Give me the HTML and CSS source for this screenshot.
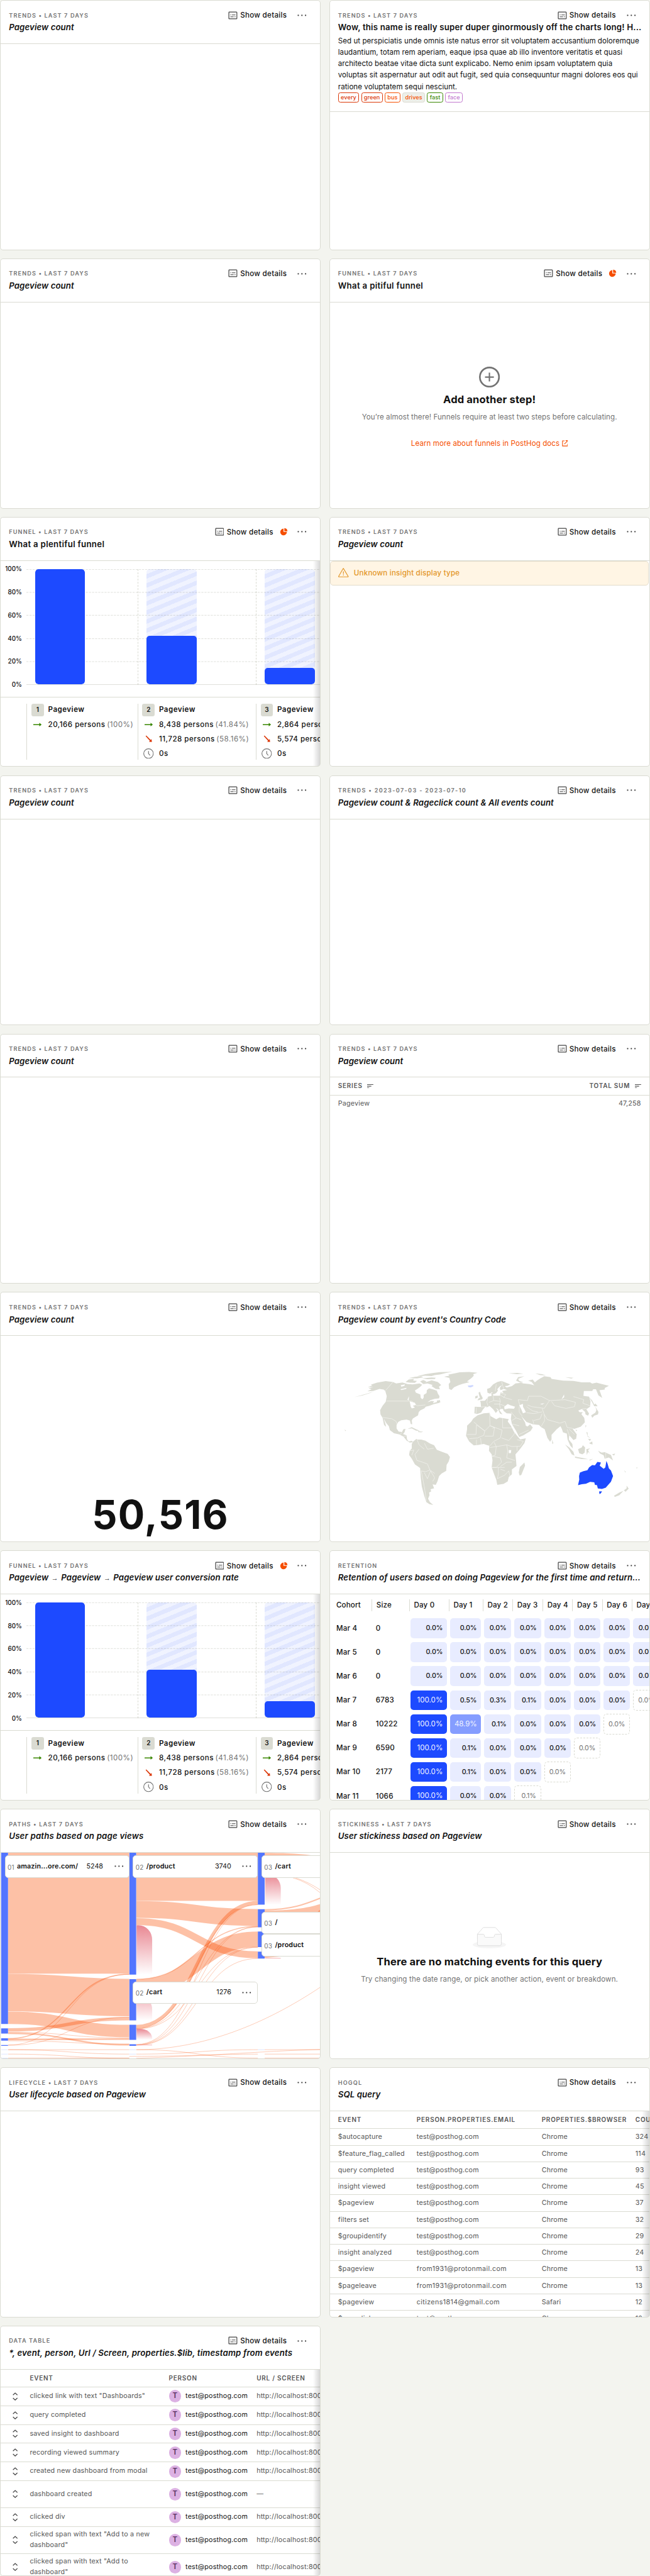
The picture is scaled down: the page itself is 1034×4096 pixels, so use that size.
FILE: index.html
```html
<!DOCTYPE html>
<html lang="en">
<head>
<meta charset="utf-8">
<title>Insight cards</title>
<link rel="stylesheet" href="styles.css">
</head>
<body>
<svg class="defs" width="0" height="0">
  <symbol id="details" viewBox="0 0 18 16"><path d="M2.200 1.400h13.600a.9.9 0 0 1 .9.9v11.200a.9.9 0 0 1-.9.9H2.200a.9.9 0 0 1-.9-.9V2.300a.9.9 0 0 1 .9-.9z" fill="none" stroke="currentColor" stroke-width="1.500"/><path d="M4.200 7h1.600M7.200 7h6.800M4.200 10.500h6.300M12 10.500h2" stroke="currentColor" stroke-width="1.300"/></symbol>
  <symbol id="dots" viewBox="0 0 20 6"><circle cx="3" cy="3" r="1.350"/><circle cx="10" cy="3" r="1.350"/><circle cx="17" cy="3" r="1.350"/></symbol>
  <symbol id="pie" viewBox="0 0 16 16"><path d="M7.300 1.900v6.400h6.500A6.400 6.400 0 1 1 7.300 1.900z"/><path d="M8.800.900a6.300 6.300 0 0 1 6 5.900h-6z"/></symbol>
  <symbol id="right" viewBox="0 0 16 10"><path d="M0 4.100h11.500V1.600L16 5l-4.500 3.400V5.900H0z"/></symbol>
  <symbol id="down" viewBox="0 0 14 14"><path d="M.8 1.900 2.100.7l8.300 8.500 1.800-1.800.6 5.600-5.700-.3 1.900-1.900z"/></symbol>
  <symbol id="clock" viewBox="0 0 20 20"><circle cx="10" cy="10" r="9.200" fill="none" stroke="currentColor" stroke-width="1.400"/><path d="M10 5v5l3 3.500" fill="none" stroke="currentColor" stroke-width="1.400"/></symbol>
  <symbol id="sort" viewBox="0 0 12 8"><path d="M0 .7h12M0 3.800h8M0 7h4" stroke="currentColor" stroke-width="1.300"/></symbol>
  <symbol id="expand" viewBox="0 0 10 16"><path d="M.8 5.200 5 1.200l4.200 4M.8 10.800l4.200 4 4.200-4" fill="none" stroke="currentColor" stroke-width="1.500"/></symbol>
</svg>
<main class="board">

<section class="card"><header><div class="top"><span class="kind">Trends • Last 7 days</span><span class="act"><svg class="i-det"><use href="#details"/></svg>Show details<svg class="i-dots"><use href="#dots"/></svg></span></div><h4><i>Pageview count</i></h4></header></section>

<section class="card"><header><div class="top"><span class="kind">Trends • Last 7 days</span><span class="act"><svg class="i-det"><use href="#details"/></svg>Show details<svg class="i-dots"><use href="#dots"/></svg></span></div><h4 class="long">Wow, this name is really super duper ginormously off the charts long! H...</h4><p class="desc">Sed ut perspiciatis unde omnis iste natus error sit voluptatem accusantium doloremque laudantium, totam rem aperiam, eaque ipsa quae ab illo inventore veritatis et quasi architecto beatae vitae dicta sunt explicabo. Nemo enim ipsam voluptatem quia voluptas sit aspernatur aut odit aut fugit, sed quia consequuntur magni dolores eos qui ratione voluptatem sequi nesciunt.</p><div class="tags"><span class="red">every</span><span class="red">green</span><span class="orange">bus</span><span class="plain">drives</span><span class="green">fast</span><span class="purple">face</span></div></header></section>

<section class="card"><header><div class="top"><span class="kind">Trends • Last 7 days</span><span class="act"><svg class="i-det"><use href="#details"/></svg>Show details<svg class="i-dots"><use href="#dots"/></svg></span></div><h4><i>Pageview count</i></h4></header></section>

<section class="card"><header><div class="top"><span class="kind">Funnel • Last 7 days</span><span class="act"><svg class="i-det"><use href="#details"/></svg>Show details<svg class="i-pie"><use href="#pie"/></svg><svg class="i-dots"><use href="#dots"/></svg></span></div><h4>What a pitiful funnel</h4></header>
<div class="empty steps"><svg class="plus" viewBox="0 0 40 40"><circle cx="20" cy="20" r="18.400" fill="none" stroke="currentColor" stroke-width="3.200"/><path d="M20 11.500v17M11.500 20h17" stroke="currentColor" stroke-width="2.600"/></svg><h2>Add another step!</h2><p>You’re almost there! Funnels require at least two steps before calculating.</p><a>Learn more about funnels in PostHog docs<svg viewBox="0 0 12 12"><path d="M5 1.200H1v9.800h9.800V7M7 .8h4.300V5M11 1 4.500 7.500" fill="none" stroke="currentColor" stroke-width="1.300"/></svg></a></div></section>

<section class="card"><header><div class="top"><span class="kind">Funnel • Last 7 days</span><span class="act"><svg class="i-det"><use href="#details"/></svg>Show details<svg class="i-pie"><use href="#pie"/></svg><svg class="i-dots"><use href="#dots"/></svg></span></div><h4>What a plentiful funnel</h4></header>
<div class="funnel scroll">
<div class="chart"><div class="axis"><span>100%</span><span>80%</span><span>60%</span><span>40%</span><span>20%</span><span>0%</span></div><div class="plot"><div class="lane"><div class="bar"><b style="height:100%"></b></div></div><div class="lane"><div class="bar"><b style="height:41.84%"></b></div></div><div class="lane"><div class="bar"><b style="height:14.2%"></b></div></div><svg class="grid" viewBox="0 0 564 222"><path d="M0 .5H564M0 44.500H564M0 88.500H564M0 133.500H564M0 177.500H564"/><path class="base" d="M0 221.500H564"/></svg></div></div>
<div class="legend"><div><p><em>1</em><strong>Pageview</strong></p><p><svg class="g"><use href="#right"/></svg>20,166 persons <u>(100%)</u></p></div><div><p><em>2</em><strong>Pageview</strong></p><p><svg class="g"><use href="#right"/></svg>8,438 persons <u>(41.84%)</u></p><p><svg class="r"><use href="#down"/></svg>11,728 persons <u>(58.16%)</u></p><p><svg class="c"><use href="#clock"/></svg>0s</p></div><div><p><em>3</em><strong>Pageview</strong></p><p><svg class="g"><use href="#right"/></svg>2,864 persons</p><p><svg class="r"><use href="#down"/></svg>5,574 persons</p><p><svg class="c"><use href="#clock"/></svg>0s</p></div></div>
</div></section>

<section class="card"><header><div class="top"><span class="kind">Trends • Last 7 days</span><span class="act"><svg class="i-det"><use href="#details"/></svg>Show details<svg class="i-dots"><use href="#dots"/></svg></span></div><h4><i>Pageview count</i></h4></header>
<div class="alert"><svg viewBox="0 0 20 18"><path d="M10 1 19.200 16.300a.6.6 0 0 1-.5.900H1.300a.6.6 0 0 1-.5-.9L9.500 1.300a.6.6 0 0 1 1 0z" fill="none" stroke="currentColor" stroke-width="1.400"/><path d="M10 6.500v5M10 12.800v1.600" stroke="currentColor" stroke-width="1.500"/></svg>Unknown insight display type</div></section>

<section class="card"><header><div class="top"><span class="kind">Trends • Last 7 days</span><span class="act"><svg class="i-det"><use href="#details"/></svg>Show details<svg class="i-dots"><use href="#dots"/></svg></span></div><h4><i>Pageview count</i></h4></header></section>

<section class="card"><header><div class="top"><span class="kind dates">Trends • 2023-07-03 - 2023-07-10</span><span class="act"><svg class="i-det"><use href="#details"/></svg>Show details<svg class="i-dots"><use href="#dots"/></svg></span></div><h4><i>Pageview count &amp; Rageclick count &amp; All events count</i></h4></header></section>

<section class="card"><header><div class="top"><span class="kind">Trends • Last 7 days</span><span class="act"><svg class="i-det"><use href="#details"/></svg>Show details<svg class="i-dots"><use href="#dots"/></svg></span></div><h4><i>Pageview count</i></h4></header></section>

<section class="card"><header><div class="top"><span class="kind">Trends • Last 7 days</span><span class="act"><svg class="i-det"><use href="#details"/></svg>Show details<svg class="i-dots"><use href="#dots"/></svg></span></div><h4><i>Pageview count</i></h4></header>
<div class="series head"><span>Series<svg><use href="#sort"/></svg></span><span>Total sum<svg><use href="#sort"/></svg></span></div><div class="series"><span>Pageview</span><span>47,258</span></div></section>

<section class="card"><header><div class="top"><span class="kind">Trends • Last 7 days</span><span class="act"><svg class="i-det"><use href="#details"/></svg>Show details<svg class="i-dots"><use href="#dots"/></svg></span></div><h4><i>Pageview count</i></h4></header>
<div class="number">50,516</div></section>

<section class="card"><header><div class="top"><span class="kind">Trends • Last 7 days</span><span class="act"><svg class="i-det"><use href="#details"/></svg>Show details<svg class="i-dots"><use href="#dots"/></svg></span></div><h4><i>Pageview count by event's Country Code</i></h4></header>
<svg class="map" viewBox="33 282 1533 1185" preserveAspectRatio="none">
<g fill="#dadbd2">
<path d="M212 602 232 590 218 584 240 576 214 578 236 567 228 564 258 552 300 543 335 548 350 556 380 551 405 560 430 562 462 556 475 564 466 575 455 585 440 597 445 610 466 620 468 640 476 648 482 638 482 622 496 612 497 595 508 584 530 592 545 598 550 615 558 630 556 642 535 645 515 652 500 665 520 657 532 660 526 670 560 658 558 668 530 676 510 685 492 690 485 700 465 712 458 722 455 740 430 758 425 770 427 792 420 790 416 770 400 765 375 768 360 778 352 795 352 815 362 833 378 836 385 820 395 818 390 838 383 848 400 855 402 878 410 890 425 887 432 895 415 897 400 885 385 862 365 850 340 843 320 825 315 803 303 785 290 757 298 785 302 806 292 795 285 755 275 735 273 710 285 685 300 662 305 630 298 600 290 592 270 588 240 600zM150 635 180 625 212 614 240 603 225 612 190 625z"/>
<path d="M395 548 410 534 435 530 432 540 450 542 440 553 415 552zM410 526 440 518 470 515 480 521 450 527zM450 515 490 503 530 496 560 491 620 489 590 496 560 505 535 508 520 514 490 512zM475 527 520 522 540 524 535 531 500 532zM465 545 480 536 495 545 490 550 520 538 550 548 566 565 555 575 560 590 540 588 520 572 525 565 500 556 480 560z"/>
<path d="M580 517 605 512 600 506 630 498 655 492 700 490 740 495 720 503 722 512 712 525 690 545 702 549 670 558 650 566 628 578 615 594 604 588 602 560 610 548 605 525zM545 655 560 652 562 666 546 662z"/>
<path d="M405 818 425 808 445 820 465 830 445 828 425 815zM455 832 480 834 470 838 455 836z"/>
<path d="M425 905 432 890 447 876 453 880 470 880 490 886 512 902 532 912 545 938 570 950 597 962 608 980 602 1005 592 1025 590 1060 568 1075 556 1090 548 1120 540 1140 525 1138 532 1160 515 1166 518 1178 508 1185 510 1200 503 1220 512 1240 528 1256 510 1252 495 1240 485 1205 473 1150 468 1100 465 1043 440 1023 425 990 412 968 415 945 425 930z"/>
<path d="M740 740 770 728 798 726 803 745 830 763 845 753 890 762 885 775 900 800 915 835 935 865 945 879 972 872 965 900 940 940 922 965 925 1000 927 1032 905 1052 905 1080 890 1095 885 1120 865 1135 835 1140 830 1110 820 1080 808 1040 812 1000 808 965 795 945 797 915 790 913 770 905 745 910 722 913 700 890 685 858 690 820 690 800 710 776 720 758z"/>
<path d="M965 1012 968 1030 950 1083 942 1087 938 1070 943 1038zM1097 880 1104 900 1099 906z"/>
<path d="M725 728 727 690 757 692 755 665 752 657 775 656 788 640 790 632 808 628 806 612 813 612 815 627 848 627 850 608 865 612 858 600 882 594 866 588 850 595 847 582 858 565 845 575 835 590 838 598 830 612 816 620 810 606 800 615 788 610 786 588 800 582 815 562 835 548 855 542 897 562 885 570 870 572 880 580 905 572 922 556 950 553 960 556 990 560 1012 567 1000 548 983 540 1005 534 1015 550 1025 540 1040 528 1060 515 1090 520 1095 530 1150 540 1200 542 1240 550 1280 550 1290 557 1310 552 1370 570 1350 583 1350 592 1325 595 1338 640 1320 625 1308 590 1295 590 1290 600 1250 600 1248 628 1275 632 1282 660 1280 690 1262 705 1275 730 1270 742 1258 735 1256 720 1240 704 1223 713 1230 722 1245 722 1238 733 1252 755 1255 780 1235 805 1205 818 1195 815 1216 850 1213 875 1200 882 1180 855 1178 880 1195 905 1197 930 1185 915 1172 880 1168 845 1150 838 1145 820 1138 803 1120 820 1095 852 1095 880 1088 892 1075 870 1062 820 1045 808 1035 795 1005 792 975 778 950 745 968 780 972 800 980 804 992 792 1005 810 995 830 960 855 940 865 925 830 905 790 900 760 903 730 880 728 865 715 862 703 850 704 845 710 860 735 848 730 838 705 822 695 812 678 838 712 828 727 815 705 798 686 785 694 778 690 765 708 757 725 738 732z"/>
<path d="M745 642 752 640 748 625 745 610 752 604 756 620 765 640 763 648 740 654zM728 643 730 630 742 626 740 640zM925 540 935 520 965 515 935 530 940 542 960 550 945 552zM1017 498 1050 503 1068 510 1040 508zM890 498 930 496 960 500 930 503zM1160 520 1200 524 1190 528z"/>
<path d="M1276 635 1290 655 1300 678 1306 672 1316 688 1300 688zM1305 690 1320 720 1318 735 1300 742 1290 755 1285 740 1305 725 1310 710zM1258 795 1262 800 1258 812zM1210 822 1218 826 1214 832z"/>
<path d="M1160 908 1180 925 1200 950 1205 972 1192 965 1178 935zM1207 977 1240 985 1272 993 1240 992 1208 985zM1222 935 1240 925 1245 912 1256 925 1254 955 1243 965 1228 958zM1262 935 1280 930 1270 940 1278 960 1270 950 1264 968zM1262 835 1268 840 1268 858 1282 872 1268 862zM1275 900 1290 890 1292 908 1282 905zM1270 875 1285 878 1278 888zM1318 944 1335 955 1350 952 1380 968 1390 1000 1370 983 1350 990 1345 970 1328 960zM1385 965 1400 960 1395 972zM1275 996 1295 990 1280 1000z"/>
<path d="M1455 1145 1465 1162 1450 1180 1442 1172 1455 1160zM1440 1175 1420 1200 1398 1210 1395 1203 1420 1185zM1443 1055 1452 1068 1448 1068zM1500 1042 1508 1040 1504 1046zM103 822 110 828 106 831z"/>
</g>
<path fill="#fff" d="M868 690 885 675 898 682 920 690 915 702 890 700 870 706zM940 682 958 674 958 690 965 705 972 722 958 728 950 705zM890 940 902 940 900 957 890 957zM372 566 392 562 390 570 375 575zM370 590 400 582 398 588 375 594zM404 650 412 630 410 655zM1143 648 1155 620 1156 635zM1040 674 1062 670 1050 678zM415 660 440 668 445 680 430 685 440 695 425 700 420 690z"/>
<path fill="none" stroke="#f8f8f5" stroke-width="2" stroke-linejoin="round" d="M300 596 335 548M303 658H425L450 685 490 680M285 752 330 760 350 775 353 790M370 850 378 838M385 862 400 858M450 878 460 910 485 935M460 935 440 965 450 1000 465 1005M485 900 500 935 530 930M412 945 435 940 425 970M465 1005 500 1020 512 1055 490 1065 470 1060M485 1070 500 1105 515 1060 535 1100 525 1120M512 1055 535 1075M470 1060 485 1150 495 1230M722 778 775 830 800 800 798 727M860 757V812H915M735 795 733 850H690M735 795 775 830 770 855 740 870 700 875M775 860H815L822 810 800 800 858 825M858 825 850 870 818 890 800 915M735 880V910M755 872 758 908M855 870 890 885 915 850 920 835M820 895 830 920 880 910 905 920 945 918 960 890 930 880M800 925 830 920 825 970 810 975 850 985 855 1010 830 1040 808 1040H870M880 910 885 945 880 985 920 1000M850 1035 880 1010 905 1010M840 1040V1080L835 1105 870 1085 890 1060 895 1090M850 1050 872 1060M930 918V945M812 815 822 810M900 720 925 755 905 770M925 755 950 765M940 690 940 722 955 745M905 790 940 800M940 850 985 825M935 650 945 690M935 650 980 655 985 630 1045 630 1085 655 1060 700 1000 690 980 680M1085 655 1160 650 1210 665 1205 690 1165 700 1110 685 1095 660M1200 632 1250 650 1245 670 1280 685M1050 700 1060 735 1075 765 1135 785 1160 775 1170 810 1195 815M975 725 1010 730 1050 720M1005 765 1010 790M1010 770 1040 760 1050 730M1045 805 1062 770 1060 735M975 690 1005 715 1030 720M1170 820 1180 855M1180 820 1205 850M1240 704 1262 700M1355 955V990M855 543 865 585M830 560 825 600M850 625 875 640 905 650M815 630 818 655 850 660 845 675 870 685M790 635 785 665 790 685M818 655 795 665M820 675 845 675 850 700M845 640 850 660M757 692 785 690M735 695 733 728M850 612 875 620 865 640"/>
<path fill="#ccd6ff" d="M693 569 704 568 718 565 721 572 708 579 697 577z"/>
<path fill="#1d4aff" d="M1222 1142 1228 1110 1227 1090 1231 1070 1248 1062 1267 1056 1275 1040 1290 1026 1303 1028 1315 1008 1332 1012 1326 1030 1345 1048 1353 1040 1358 1003 1364 1020 1370 1045 1380 1058 1390 1090 1380 1122 1355 1157 1337 1164 1317 1161 1313 1142 1303 1140 1300 1126 1280 1123 1260 1134 1240 1137zM1323 1178 1337 1177 1332 1188 1325 1194z"/>
</svg></section>

<section class="card"><header><div class="top"><span class="kind">Funnel • Last 7 days</span><span class="act"><svg class="i-det"><use href="#details"/></svg>Show details<svg class="i-pie"><use href="#pie"/></svg><svg class="i-dots"><use href="#dots"/></svg></span></div><h4><i>Pageview <span class="arrow">→</span> Pageview <span class="arrow">→</span> Pageview user conversion rate</i></h4></header>
<div class="funnel scroll">
<div class="chart"><div class="axis"><span>100%</span><span>80%</span><span>60%</span><span>40%</span><span>20%</span><span>0%</span></div><div class="plot"><div class="lane"><div class="bar"><b style="height:100%"></b></div></div><div class="lane"><div class="bar"><b style="height:41.84%"></b></div></div><div class="lane"><div class="bar"><b style="height:14.2%"></b></div></div><svg class="grid" viewBox="0 0 564 222"><path d="M0 .5H564M0 44.500H564M0 88.500H564M0 133.500H564M0 177.500H564"/><path class="base" d="M0 221.500H564"/></svg></div></div>
<div class="legend"><div><p><em>1</em><strong>Pageview</strong></p><p><svg class="g"><use href="#right"/></svg>20,166 persons <u>(100%)</u></p></div><div><p><em>2</em><strong>Pageview</strong></p><p><svg class="g"><use href="#right"/></svg>8,438 persons <u>(41.84%)</u></p><p><svg class="r"><use href="#down"/></svg>11,728 persons <u>(58.16%)</u></p><p><svg class="c"><use href="#clock"/></svg>0s</p></div><div><p><em>3</em><strong>Pageview</strong></p><p><svg class="g"><use href="#right"/></svg>2,864 persons</p><p><svg class="r"><use href="#down"/></svg>5,574 persons</p><p><svg class="c"><use href="#clock"/></svg>0s</p></div></div>
</div></section>

<section class="card"><header><div class="top"><span class="kind">Retention</span><span class="act"><svg class="i-det"><use href="#details"/></svg>Show details<svg class="i-dots"><use href="#dots"/></svg></span></div><h4 class="long"><i>Retention of users based on doing Pageview for the first time and return...</i></h4></header>
<div class="retention">
<div class="rrow rhead"><span>Cohort</span><span>Size</span><span>Day 0</span><span>Day 1</span><span>Day 2</span><span>Day 3</span><span>Day 4</span><span>Day 5</span><span>Day 6</span><span>Day 7</span></div>
<div class="rrow"><span>Mar 4</span><span>0</span><b>0.0%</b><b>0.0%</b><b>0.0%</b><b>0.0%</b><b>0.0%</b><b>0.0%</b><b>0.0%</b><b>0.0%</b></div>
<div class="rrow"><span>Mar 5</span><span>0</span><b>0.0%</b><b>0.0%</b><b>0.0%</b><b>0.0%</b><b>0.0%</b><b>0.0%</b><b>0.0%</b><b>0.0%</b></div>
<div class="rrow"><span>Mar 6</span><span>0</span><b>0.0%</b><b>0.0%</b><b>0.0%</b><b>0.0%</b><b>0.0%</b><b>0.0%</b><b>0.0%</b><b>0.0%</b></div>
<div class="rrow"><span>Mar 7</span><span>6783</span><b class="full">100.0%</b><b>0.5%</b><b>0.3%</b><b>0.1%</b><b>0.0%</b><b>0.0%</b><b>0.0%</b><b class="open">0.0%</b></div>
<div class="rrow"><span>Mar 8</span><span>10222</span><b class="full">100.0%</b><b class="half">48.9%</b><b>0.1%</b><b>0.0%</b><b>0.0%</b><b>0.0%</b><b class="open">0.0%</b></div>
<div class="rrow"><span>Mar 9</span><span>6590</span><b class="full">100.0%</b><b>0.1%</b><b>0.0%</b><b>0.0%</b><b>0.0%</b><b class="open">0.0%</b></div>
<div class="rrow"><span>Mar 10</span><span>2177</span><b class="full">100.0%</b><b>0.1%</b><b>0.0%</b><b>0.0%</b><b class="open">0.0%</b></div>
<div class="rrow"><span>Mar 11</span><span>1066</span><b class="full">100.0%</b><b>0.0%</b><b>0.0%</b><b class="open">0.1%</b></div>
</div></section>

<section class="card"><header><div class="top"><span class="kind">Paths • Last 7 days</span><span class="act"><svg class="i-det"><use href="#details"/></svg>Show details<svg class="i-dots"><use href="#dots"/></svg></span></div><h4 class="wide"><i>User paths based on page views</i></h4></header>
<div class="paths"><svg viewBox="1 84 614 395">
<defs><linearGradient id="drop" x1="0" y1="0" x2="0" y2="1"><stop offset="0" stop-color="#e98792"/><stop offset="1" stop-color="#fff"/></linearGradient><linearGradient id="drop2" x1="0" y1="0" x2="0" y2="1"><stop offset="0" stop-color="#f2b0b8"/><stop offset="1" stop-color="#fff"/></linearGradient></defs>
<g fill="none" stroke="#f84e00" stroke-opacity=".35">
<path d="M15.500 200H248" stroke-width="232"/>
<path d="M15.500 352.300C132 352.300 132 362 248 362" stroke-width="72"/>
<path d="M15.500 400.700C132 400.700 132 426.300 248 426.300" stroke-width="24"/>
<path d="M15.500 424C132 424 132 402.500 248 402.500" stroke-width="6.500"/>
<path d="M15.500 428.500C132 428.500 132 439.500 248 439.500"/>
<path d="M15.500 430.500C132 430.500 132 452.500 248 452.500" stroke-width="3"/>
<path d="M15.500 440.700C132 440.700 132 317 248 317" stroke-width="2"/>
<path d="M15.500 442.500C132 442.500 132 441.500 248 441.500" stroke-width="3"/>
<path d="M15.500 445C132 445 132 451 248 451"/>
<path d="M15.500 453C132 453 132 317.500 248 317.500M15.500 453.500C132 453.500 132 399.500 248 399.500M15.500 462H248M15.500 462C132 462 132 470.500 248 470.500M15.500 470.500C132 470.500 132 478.500 248 478.500M15.500 478H248"/>
<path d="M261.500 130.200H495" stroke-width="92.300"/>
<path d="M261.500 192.800C378 192.800 378 208.300 495 208.300" stroke-width="32.500"/>
<path d="M261.500 216.200C378 216.200 378 280 495 280" stroke-width="13.300"/>
<path d="M261.500 326.800C378 326.800 378 225.300 495 225.300" stroke-width="1.700"/>
<path d="M261.500 342C378 342 378 250 495 250" stroke-width="29.500"/>
<path d="M261.500 417.700C378 417.700 378 179.700 495 179.700" stroke-width="6.500"/>
<path d="M261.500 421.500C378 421.500 378 226.500 495 226.500M261.500 421C378 421 378 183.500 495 183.500M261.500 422C378 422 378 265 495 265M261.500 452C378 452 378 183.600 495 183.600M261.500 452.500C378 452.500 378 226 495 226M261.500 453C378 453 378 265.500 495 265.500M261.500 453.500C378 453.500 378 287 495 287"/>
<path d="M261.500 462C390 462 510 412 615 342M261.500 462C378 462 378 478 495 478M261.500 470.500C378 470.500 378 462 495 462M261.500 478.500C400 474 500 465 615 461.500M248 475C380 474 430 470.500 495 470.500M508 462H615M508 470.500H615M508 478H615"/>
<path d="M562 132Q590 140 615 161M567 132Q592 140 615 155.500"/><path d="M508 193.500C560 193 585 183 615 171" stroke-width="2.500"/>
</g>
<g fill="#f84e00" fill-opacity=".35"><path d="M508 84.300C540 84.300 570 85 599 89H508zM508 195C560 195 590 190 615 182.500V198H508z"/><path d="M610 197 615 193V198zM508 283H540L508 286z"/></g>
<path d="M262 223h4a26 28 0 0 1 26 28v67h-30z" fill="url(#drop)"/><path d="M262 360h6a24 24 0 0 1 24 24v22h-30z" fill="url(#drop2)"/><path d="M262 422h6a24 18 0 0 1 24 18v3h-30z" fill="url(#drop)"/><path d="M509 126h6a24 26 0 0 1 24 26v32h-30z" fill="url(#drop)"/><path d="M262 453h30M509 286.500h30" stroke="#f4a3a6"/>
<path fill="#5375ff" d="M2 84h13.200v328.600H2zM2 421h13.200v10H2zM2 440h13.200v4.700H2zM2 453h13.200v1.700H2zM248.300 84h13v234h-13zM248.300 326.500h13v79.200h-13zM248.300 414.300h13v28.700h-13zM248.300 451.500h13v3h-13zM495 84h13v99.600h-13zM495 192.300h13V227h-13zM495 235.300h13V265h-13zM495 273.700h13V287h-13z"/>
<path fill="#d4ddff" d="M2 461.500h13v1H2zM2 470h13v1H2zM2 478h13v1H2zM248 461.500h13v1h-13zM248 470h13v1h-13zM495 461.500h13v1h-13z"/>
</svg>
<div class="node" style="left:8px;top:5px"><small>01</small><strong>amazin...ore.com/</strong><span>5248</span><svg><use href="#dots"/></svg></div>
<div class="node" style="left:254px;top:5px"><small>02</small><strong>/product</strong><span>3740</span><svg><use href="#dots"/></svg></div>
<div class="node" style="left:254px;top:247px"><small>02</small><strong>/cart</strong><span>1276</span><svg><use href="#dots"/></svg></div>
<div class="node" style="left:501px;top:5px"><small>03</small><strong>/cart</strong></div>
<div class="node" style="left:501px;top:113px"><small>03</small><strong>/</strong></div>
<div class="node" style="left:501px;top:156px"><small>03</small><strong>/product</strong></div>
</div></section>

<section class="card"><header><div class="top"><span class="kind">Stickiness • Last 7 days</span><span class="act"><svg class="i-det"><use href="#details"/></svg>Show details<svg class="i-dots"><use href="#dots"/></svg></span></div><h4><i>User stickiness based on Pageview</i></h4></header>
<div class="empty nodata"><svg class="tray" viewBox="0 0 64 41"><g transform="translate(0 1)" fill="none"><ellipse fill="#f5f5f5" cx="32" cy="33" rx="32" ry="7"/><g stroke="#d9d9d9"><path d="M55 12.760 44.854 1.258C44.367.474 43.656 0 42.907 0H21.093c-.749 0-1.460.474-1.947 1.257L9 12.761V22h46v-9.240z"/><path fill="#fafafa" d="M41.613 15.931c0-1.605.994-2.930 2.227-2.931H55v18.137C55 33.260 53.680 35 52.050 35h-40.100C10.320 35 9 33.259 9 31.137V13h11.160c1.233 0 2.227 1.323 2.227 2.928v.022c0 1.605 1.005 2.901 2.237 2.901h14.752c1.232 0 2.237-1.308 2.237-2.913v-.007z"/></g></g></svg><h2>There are no matching events for this query</h2><p>Try changing the date range, or pick another action, event or breakdown.</p></div></section>

<section class="card"><header><div class="top"><span class="kind">Lifecycle • Last 7 days</span><span class="act"><svg class="i-det"><use href="#details"/></svg>Show details<svg class="i-dots"><use href="#dots"/></svg></span></div><h4><i>User lifecycle based on Pageview</i></h4></header></section>

<section class="card"><header><div class="top"><span class="kind">HogQL</span><span class="act"><svg class="i-det"><use href="#details"/></svg>Show details<svg class="i-dots"><use href="#dots"/></svg></span></div><h4><i>SQL query</i></h4></header>
<div class="sql scroll">
<div class="head"><span>event</span><span>person.properties.email</span><span>properties.$browser</span><span>count()</span></div>
<div><span>$autocapture</span><span>test@posthog.com</span><span>Chrome</span><span>324</span></div>
<div><span>$feature_flag_called</span><span>test@posthog.com</span><span>Chrome</span><span>114</span></div>
<div><span>query completed</span><span>test@posthog.com</span><span>Chrome</span><span>93</span></div>
<div><span>insight viewed</span><span>test@posthog.com</span><span>Chrome</span><span>45</span></div>
<div><span>$pageview</span><span>test@posthog.com</span><span>Chrome</span><span>37</span></div>
<div><span>filters set</span><span>test@posthog.com</span><span>Chrome</span><span>32</span></div>
<div><span>$groupidentify</span><span>test@posthog.com</span><span>Chrome</span><span>29</span></div>
<div><span>insight analyzed</span><span>test@posthog.com</span><span>Chrome</span><span>24</span></div>
<div><span>$pageview</span><span class="mixed">from1931@protonmail.com</span><span>Chrome</span><span>13</span></div>
<div><span>$pageleave</span><span class="mixed">from1931@protonmail.com</span><span>Chrome</span><span>13</span></div>
<div><span>$pageview</span><span class="mixed">citizens1814@gmail.com</span><span>Safari</span><span>12</span></div>
<div><span>$rageclick</span><span>test@posthog.com</span><span>Chrome</span><span>12</span></div>
</div></section>

<section class="card"><header><div class="top"><span class="kind">Data table</span><span class="act"><svg class="i-det"><use href="#details"/></svg>Show details<svg class="i-dots"><use href="#dots"/></svg></span></div><h4 class="wide"><i>*, event, person, Url / Screen, properties.$lib, timestamp from events</i></h4></header>
<div class="events scroll">
<div class="head"><span></span><span>Event</span><span>Person</span><span>Url / Screen</span></div>
<div><svg><use href="#expand"/></svg><span>clicked link with text "Dashboards"</span><span class="who"><em>T</em>test@posthog.com</span><span>http://localhost:8000/</span></div>
<div><svg><use href="#expand"/></svg><span>query completed</span><span class="who"><em>T</em>test@posthog.com</span><span>http://localhost:8000/</span></div>
<div><svg><use href="#expand"/></svg><span>saved insight to dashboard</span><span class="who"><em>T</em>test@posthog.com</span><span>http://localhost:8000/</span></div>
<div><svg><use href="#expand"/></svg><span>recording viewed summary</span><span class="who"><em>T</em>test@posthog.com</span><span>http://localhost:8000/</span></div>
<div><svg><use href="#expand"/></svg><span>created new dashboard from modal</span><span class="who"><em>T</em>test@posthog.com</span><span>http://localhost:8000/</span></div>
<div class="tall"><svg><use href="#expand"/></svg><span>dashboard created</span><span class="who"><em>T</em>test@posthog.com</span><span>—</span></div>
<div><svg><use href="#expand"/></svg><span>clicked div</span><span class="who"><em>T</em>test@posthog.com</span><span>http://localhost:8000/</span></div>
<div class="tall"><svg><use href="#expand"/></svg><span>clicked span with text "Add to a new<br>dashboard"</span><span class="who"><em>T</em>test@posthog.com</span><span>http://localhost:8000/</span></div>
<div class="tall"><svg><use href="#expand"/></svg><span>clicked span with text "Add to<br>dashboard"</span><span class="who"><em>T</em>test@posthog.com</span><span>http://localhost:8000/</span></div>
</div></section>

</main>
</body>
</html>
```
FILE: styles.css
```css
* { box-sizing: border-box; }
html { zoom: 0.8284; background: #f3f4ef; overflow: hidden; }
body { margin: 0; width: 1248px; font: 14px/22px Inter, "Liberation Sans", sans-serif; color: #111; }
h2, h4, p { margin: 0; }
svg { flex: none; fill: currentColor; }
.defs { position: absolute; }
.board { display: grid; grid-template-columns: 616px 616px; grid-auto-rows: 480px; gap: 16px; }
.card { display: flex; flex-direction: column; background: #fff; border: 1px solid #dadbd2; border-radius: 6px; overflow: hidden; }

/* Card header */
header { flex: none; padding: 16px; border-bottom: 1px solid #dadbd2; }
.top { display: flex; justify-content: space-between; align-items: center; height: 24px; }
.kind { font-size: 11px; font-weight: 600; letter-spacing: 1.37px; text-transform: uppercase; color: #737373; line-height: 16px; }
.kind.dates { letter-spacing: 1.6px; }
.act { display: flex; align-items: center; font-weight: 500; letter-spacing: .36px; padding: 1px 9px 0 0; }
.i-det { width: 18px; height: 16px; margin: -1px 5px 0 0; color: #444; }
.i-dots { width: 20px; height: 6px; margin: -1px 0 0 19px; color: #444; }
.i-pie { width: 16px; height: 16px; margin: -1px -2px 0 12px; color: #f54e00; }
h4 { font-size: 16px; line-height: 24px; font-weight: 600; letter-spacing: .37px; margin: 0 0 2px; white-space: nowrap; }
h4 i { letter-spacing: .08px; }
h4.long { letter-spacing: .23px; }
h4.wide, h4.wide i { letter-spacing: .2px; }
h4.long i { letter-spacing: .12px; }
.arrow { display: inline-block; width: 16px; text-align: center; font: normal 400 13px/16px "Liberation Sans", sans-serif; }
.desc { letter-spacing: .045px; }
.tags { display: flex; gap: 4px; }
.tags span { height: 20px; border: 1px solid currentColor; border-radius: 4px; padding: 0 4px; font-size: 11px; line-height: 18px; font-weight: 500; letter-spacing: .08px; }
.red { color: #db3707; }
.orange { color: #f54e00; }
.tags .plain { color: #f54e00; background: #eeefe9; border-color: #dadbd2; }
.green { color: #388600; }
.purple { color: #c278cf; }

.scroll { position: relative; flex: 1; overflow: hidden; }
.scroll::after { content: ""; position: absolute; inset: 0 0 0 auto; width: 14px; background: linear-gradient(to right, rgba(0,0,0,0), rgba(0,0,0,.16)); }

/* Empty states */
.empty { display: flex; flex-direction: column; align-items: center; text-align: center; color: #737373; letter-spacing: .08px; }
.empty h2 { color: #111; font-weight: 700; line-height: 28px; font-size: 20px; letter-spacing: .18px; }
.steps { padding-top: 123px; }
.plus { width: 40px; height: 40px; margin-bottom: 10px; }
.steps p { margin: 8px 0 29px; }
.steps a { color: #f54e00; display: flex; align-items: center; gap: 4px; }
.steps a svg { width: 12px; height: 12px; }
.nodata { padding-top: 142px; letter-spacing: .16px; }
.tray { width: 64px; height: 41px; margin-bottom: 13px; }
.nodata p { margin-top: 8px; }

/* Funnel */
.chart { display: flex; height: 262px; padding: 16px 0 0; border-bottom: 1px solid #dadbd2; }
.axis { flex: none; width: 50px; padding-right: 9px; margin: -8px 0 0; height: 238px; display: flex; flex-direction: column; justify-content: space-between; align-items: flex-end; font-size: 12px; line-height: 16px; font-weight: 500; }
.plot { position: relative; display: grid; grid-template-columns: 213px 227px 227px; height: 222px; flex: none; }
.lane { padding: 0 0 1px 16px; }
.lane + .lane { border-left: 1px dashed #dadbd2; }
.bar { width: 96px; height: 221px; border-radius: 6px; display: flex; align-items: flex-end; background: repeating-linear-gradient(-22.5deg, #e1e7ff 0 8px, #f0f3ff 8px 16px); overflow: hidden; }
.bar b { width: 100%; border-radius: 6px; background: #1d4aff; position: relative; z-index: 1; }
.grid { position: absolute; left: 0; top: 0; width: 564px; height: 222px; fill: none; stroke: rgba(90,95,70,.24); stroke-dasharray: 4 2; }
.grid .base { stroke-dasharray: none; }
.legend { display: grid; grid-template-columns: 213px 227px 227px; padding: 12px 0 0 50px; }
.legend > div { border-left: 1px solid #dadbd2; padding-left: 8px; height: 108px; }
.legend p { display: flex; align-items: center; height: 24px; margin-bottom: 4px; font-weight: 500; white-space: pre; letter-spacing: .58px; }
.legend em { width: 24px; height: 24px; margin-right: 8px; border-radius: 4px; background: #dadbd2; font: 600 12px/24px Inter, sans-serif; letter-spacing: 0; text-align: center; }
.legend strong { font-weight: 600; }
.legend u { text-decoration: none; font-weight: 400; color: #737373; margin-left: -1px; }
.legend .g { width: 16px; height: 10px; margin: 0 12px 0 4px; color: #388600; }
.legend .r { width: 14px; height: 14px; margin: 0 12px 0 6px; color: #db3707; }
.legend .c { width: 20px; height: 20px; margin: 0 10px 0 2px; color: #737373; }

.alert { display: flex; align-items: center; gap: 10px; height: 48px; margin: 0 1px; padding: 0 14px; border: 1px solid #e3dccb; border-radius: 6px; background: #fff5e4; color: #e39628; font-weight: 500; letter-spacing: .24px; }
.alert svg { width: 20px; height: 18px; margin-top: -2px; }

/* Tables */
.series, .sql > div { font-size: 13px; letter-spacing: .22px; color: #555; }
.series { display: flex; justify-content: space-between; padding: 0 16px; line-height: 31px; }
.series svg { width: 12px; height: 8px; margin-left: 9px; }
.head { border-bottom: 1px solid #dadbd2; }
.series.head, .card .head > span { font-size: 12px; font-weight: 600; letter-spacing: .95px; text-transform: uppercase; line-height: 33px; }
.sql > div { display: grid; grid-template-columns: 151px 240px 180px 100px; padding-left: 16px; line-height: 30.5px; border-bottom: 1px solid #dadbd2; }
.mixed { letter-spacing: .45px; }
.events > div { display: grid; grid-template-columns: 40px 267px 168.500px 180px; padding-left: 16px; align-items: center; font-size: 13px; letter-spacing: .23px; line-height: 20px; height: 36px; border-bottom: 1px solid #dadbd2; color: #555; white-space: nowrap; }
.events > .head { height: 34px; }
.events > .tall { height: 52px; }
.events svg { width: 10px; height: 16px; margin-left: 7px; color: #444; }
.events .who { display: flex; align-items: center; color: #111; }
.who em { width: 24px; height: 24px; border-radius: 50%; background: #dcb1e3; color: #572e5e; font: 600 14px/24px Inter, sans-serif; text-align: center; margin-right: 8px; }

.number { text-align: center; font-size: 76px; font-weight: 700; line-height: 90px; letter-spacing: 1.6px; padding-top: 298px; }
.map { display: block; width: 614px; height: 395px; }

/* Retention */
.retention { padding-top: 10px; }
.rrow { display: grid; grid-template-columns: 80.500px 72px 76px 65.300px 57px 58px 57px 57px 57px 57px; height: 46px; align-items: center; font-weight: 500; white-space: nowrap; }
.rrow span { padding-left: 12.500px; letter-spacing: .3px; }
.rrow span + span { padding-left: 8px; }
.rhead { height: 22px; margin-bottom: 10px; }
.rhead span { letter-spacing: .2px; }
.rhead span + span { border-left: 1px solid #dadbd2; }
.rrow b { font-size: 13px; font-weight: 500; height: 38px; line-height: 38px; margin: 0 3px; padding-right: 8.500px; text-align: right; border-radius: 6px; background: #e8ecff; letter-spacing: -.15px; }
.rrow .full { background: #1d4aff; color: #f0f3ff; font-size: 14px; font-weight: 400; letter-spacing: 0; }
.rrow .half { background: #859dff; color: #f0f3ff; font-size: 14px; font-weight: 400; letter-spacing: -.2px; }
.rrow .open { height: 40px; background: #fff; border: 1px dashed #dadbd2; color: #737373; font-weight: 400; }

/* Paths */
.paths { position: relative; height: 395px; }
.paths > svg { display: block; width: 614px; height: 395px; }
.node { position: absolute; width: 240px; height: 43px; display: flex; align-items: center; background: #fff; border: 1px solid #dadbd2; border-radius: 6px; padding: 0 10px 0 4px; font-size: 13px; }
.node small { font-size: 12px; color: #737373; margin-right: 5px; padding-top: 2px; letter-spacing: .3px; }
.node strong { font-weight: 600; flex: 1; letter-spacing: .18px; }
.node span { margin-right: 20px; }
.node svg { width: 20px; height: 6px; color: #444; }
```
